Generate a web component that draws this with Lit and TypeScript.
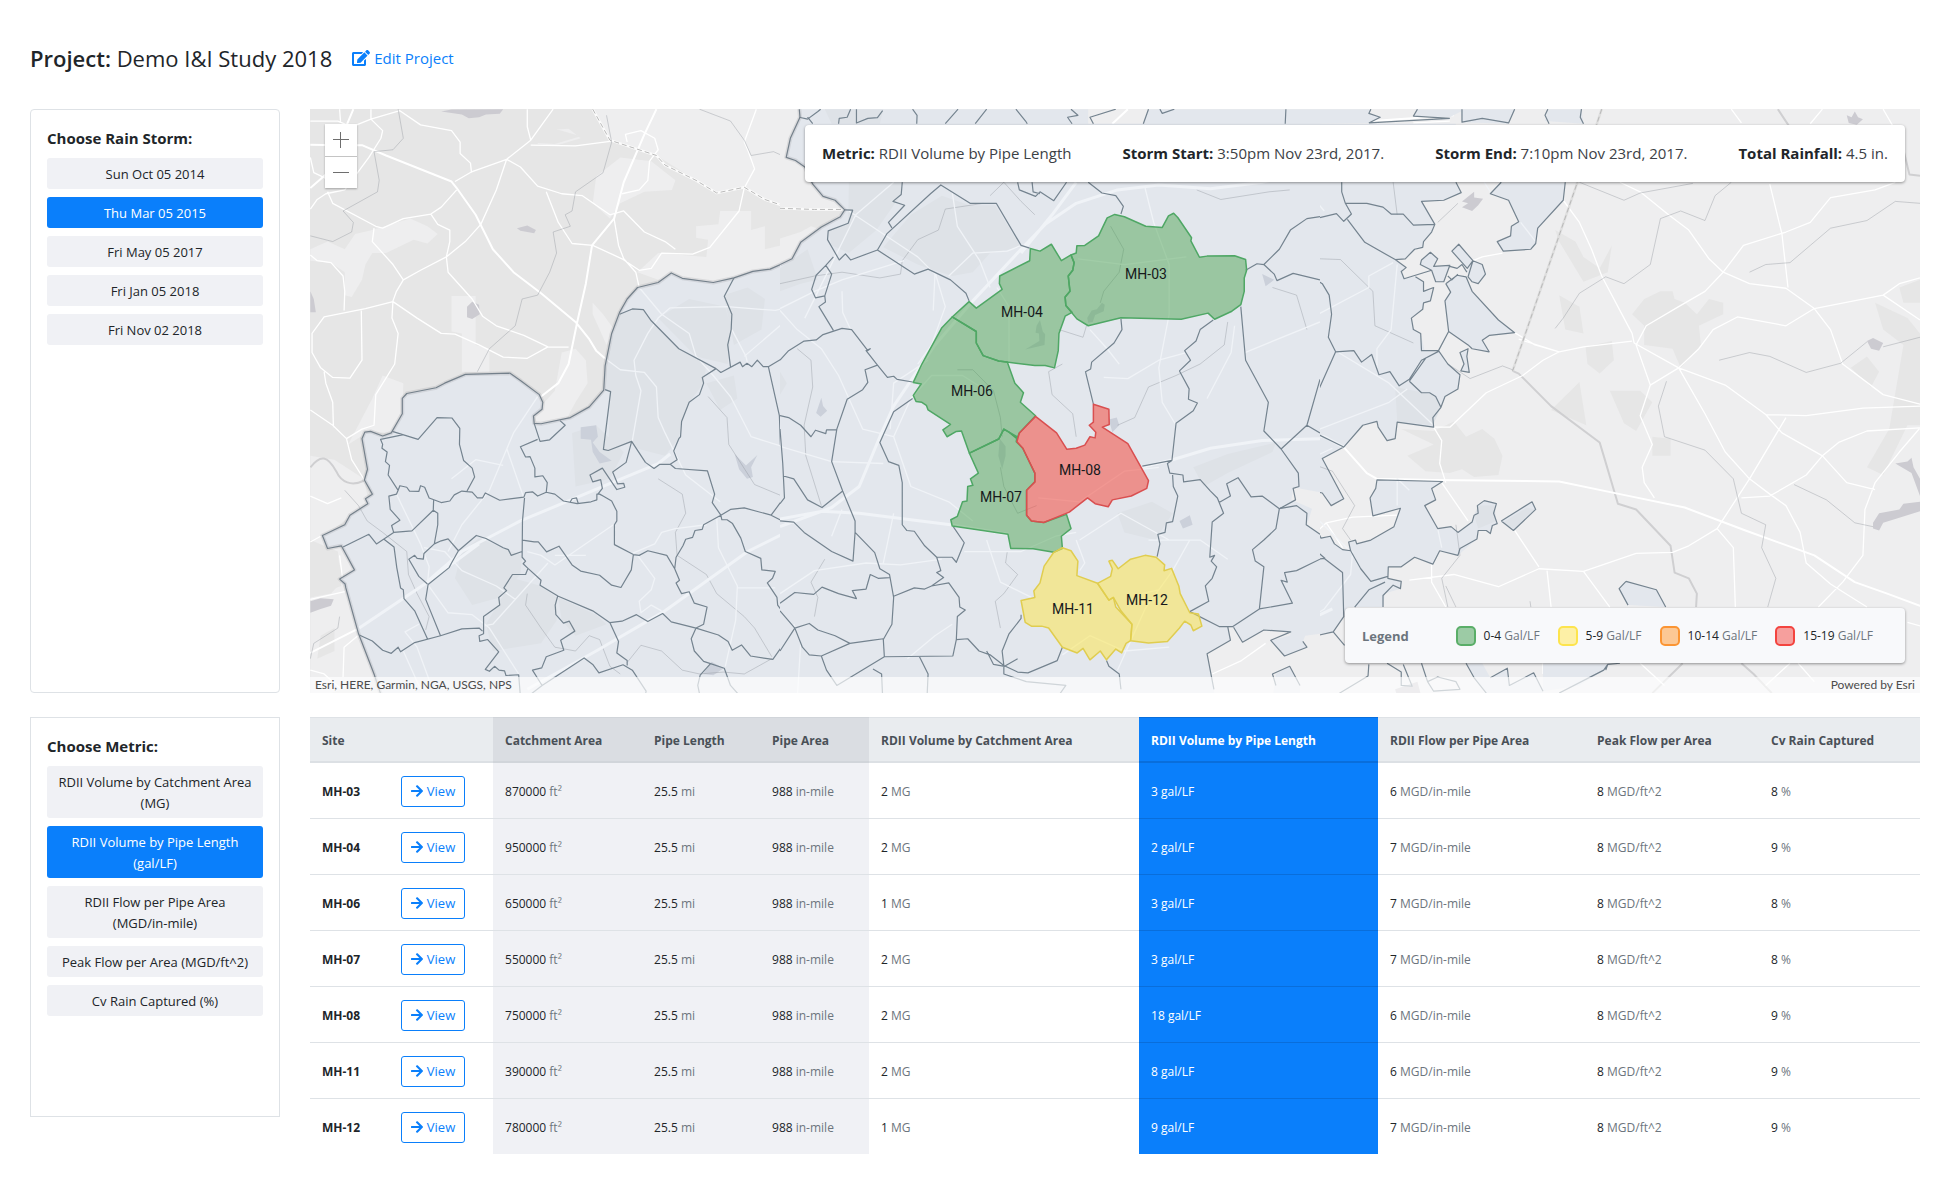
import { LitElement, html, svg, css } from "lit";
import { customElement, state } from "lit/decorators.js";
import { classMap } from "lit/directives/class-map.js";

/** One rectangular sheet of the base map; its paths use a 1568-unit square grid. */
interface Sheet {
  x: number;
  width: number;
  ground: string;
  light: string;
  urban: string;
  water: string;
  area: string;
  edge: string;
  shade: string;
  areaWater: string;
  roads: string;
  highways: string;
  areaRoads: string;
  areaHighways: string;
  streams: string;
  border: string;
  borderBase: string;
  stateLine: string;
  lines: string;
}

const WEST: Sheet = {
  x: -10,
  width: 540,
  ground: "#e6e6e6",
  light: `M850 24 900 105 1035 145 1150 210 1210 243 1290 228 1350 260 1420 282 1568 284 1568 24Z
    M860 200 930 150 1020 160 1090 210 1080 235 1000 240 930 270 900 310 850 270Z
    M1150 330 1215 325 1220 290 1310 290 1310 340 1350 330 1350 390 1490 360 1490 395 1400 450 1310 465 1200 485 1110 475 1040 470 980 450 1040 400 1180 410 1185 365 1150 360Z
    M440 512 510 512 510 640 550 650 550 710 470 710 470 610 440 605Z
    M30 390 80 370 130 390 160 350 210 340 320 310 370 330 400 350 370 375 330 365 250 400 210 400 190 430 180 470 150 515 130 510 130 450 90 425 30 420Z
    M760 660 800 650 830 680 835 740 800 790 770 840 690 850 680 820 740 760Z
    M850 530 880 560 912 600 890 640 870 600 850 560Z
    M700 80 780 75 815 100 740 120 690 115Z
    M30 930 100 940 185 990 200 1050 70 1140 130 1180 160 1228 118 1252 220 1510 30 1568 30 1300 120 1270 110 1180 30 1150Z
    M240 720 300 740 297 820 265 870 200 866 140 900 210 780Z`,
  urban: `M30 1170 100 1180 130 1250 90 1290 30 1300Z M60 1400 100 1380 100 1440 50 1460Z M690 80 740 75 815 95 740 115 680 112Z`,
  water: `M410 30 440 25 590 24 580 36 540 38 520 45 490 48 470 38Z
    M485 540 500 527 520 535 522 560 500 572 485 568Z
    M630 335 660 328 685 340 680 348 640 342Z M30 500 40 520 46 555 30 555Z
    M30 1310 60 1302 98 1305 90 1322 60 1330 30 1340Z`,
  area: `M65 1138 130 1110 145 1085 197 1055 190 1042 210 1030 187 993 196 965 180 885 188 868 205 866 240 878 265 870 297 820 297 780 310 767 395 752 420 740 480 717 610 714 640 733 695 770 705 790 703 808 678 826 680 845 700 846 785 830 840 802 882 758 886 695 905 610 928 555 950 520 980 490 1040 477 1078 452 1110 466 1200 477 1260 465 1315 448 1365 442 1425 418 1568 400 1568 1568 240 1568 215 1500 170 1395 133 1275 115 1252 158 1228 120 1165 80 1172Z`,
  edge: `M240 1568 215 1500 170 1395 133 1275 131 1265 115 1252 158 1228 120 1165 80 1172 65 1138 130 1110 145 1085 197 1055 190 1042 210 1030 187 993 196 965 180 885 188 868 205 866 240 878 265 870 297 820 297 780 310 767 395 752 420 740 480 717 610 714 640 733 695 770 705 790 703 808 678 826 680 845 700 846 785 830 840 802 882 758 886 695 905 610 928 555 950 520 980 490 1040 477 1078 452 1110 466 1200 477 1260 465 1315 448 1365 442 1425 418`,
  shade: `M928 560 965 546 997 548 1020 577 1100 650 1180 690 1172 740 1130 790 1108 840 1100 885 1060 930 975 910 963 892 895 916 902 762 886 757 890 680Z
    M1040 570 1130 520 1235 540 1252 600 1242 690 1150 670Z M1230 510 1300 490 1350 520 1340 600 1260 640Z
    M470 1180 520 1145 600 1175 645 1190 640 1240 580 1300 500 1320 450 1250Z
    M620 1250 700 1270 745 1300 745 1360 700 1420 560 1440 540 1370Z M750 1300 860 1345 890 1370 800 1400 760 1360Z
    M790 870 860 850 940 920 900 990 800 1010Z M1180 740 1260 720 1270 780 1220 810Z`,
  areaWater: `M815 855 860 850 865 880 850 895 870 920 905 943 870 950 850 920 845 888 815 885Z
    M1262 925 1295 955 1328 928 1310 960 1315 985 1298 990 1275 965Z M1170 1500 1195 1468 1230 1485 1200 1503Z`,
  roads: `M30 150 40 190 75 205 M670 118 800 120 900 108 M450 213 500 187 600 155 670 105 735 24 M525 325 570 235 600 155 640 175 690 225 760 245 820 250 900 300 940 290 1000 345 1060 370 1090 390
    M670 105 660 70 660 24 M715 240 750 320 790 375 850 380 935 415 985 445 1020 440 1050 400 1140 403 1190 385 1275 290 1290 230 1320 180 1300 130 1290 110 1325 24
    M912 310 925 380 940 415 975 450 985 490 M206 24 206 50 240 80 235 100 200 150 130 235 75 245 50 260 30 285
    M80 240 95 270 220 330 240 335 300 310 380 298 410 280 455 235 M380 298 400 325 435 340 435 370 425 410 430 450 500 520 530 565 570 590 650 615 720 645 780 646
    M525 325 480 370 425 410 350 445 300 470 280 500 270 525 267 570 285 610 275 690 220 770 215 850 180 860 135 885 M215 335 210 370 270 430 300 470
    M270 527 190 545 70 567 35 610 35 660 60 700 95 725 145 727 180 680 178 550 M270 527 340 570 410 610 450 612 520 640 590 672 660 675 720 645
    M30 405 50 420 90 425 125 460 130 500 128 550 M70 710 75 740 95 790 97 855 M30 810 95 850 135 885 150 940 187 993
    M206 50 290 28 350 65 440 80 465 110 465 140 495 165 498 190 M115 24 118 60 M30 55 110 55 150 70 206 50
    M950 110 945 90 990 80 1030 100 1040 130 1015 160 1010 210 985 235 935 245 M30 1035 80 1055 120 1040 M30 1155 60 1140
    M115 1190 125 1260 M30 1305 130 1285 M30 1490 70 1500 120 1540 M125 1508 128 1430 175 1395`,
  highways: `M30 117 110 118 180 118 250 145 440 213 455 230 510 300 560 390 620 450 700 505 800 580 840 625 860 655 885 675 M30 230 75 195 110 120 155 24
    M1035 24 1000 90 940 215 912 310 848 380 830 480 805 580 780 690 750 740 700 775 M30 1445 172 1380`,
  areaRoads: `M885 675 930 705 1000 712 1035 750 1040 830 1060 870 1120 980 1220 1050 M1075 543 1040 570 1010 610 970 680 975 720 990 760 965 890
    M1075 543 1240 540 1380 550 1568 510 M985 490 1050 560 1130 610 1150 670 1200 720 1250 775 1310 880 1400 905 M1254 600 1295 670 1300 690 M1290 670 1420 570
    M690 775 620 870 550 1020 470 1110 430 1180 M600 910 650 1040 M720 1210 560 1370 530 1375 M660 1180 700 1190 740 1215 910 1110 M740 1190 830 1190
    M440 990 510 940 590 955 M360 1170 420 1180 470 1230 570 1270 625 1305 M280 1030 350 1160 375 1220 370 1265 430 1340 500 1345 550 1380 635 1500
    M300 1440 350 1540 M345 1370 305 1390 340 1430 385 1540 M1210 1090 1215 1170 1270 1270 1265 1360 1235 1480 M1270 1275 1380 1275
    M980 1190 1030 1250 1020 1280 985 1310 990 1340 1020 1320 1050 1335 M1180 1110 1090 1120 1050 1130 1030 1160 965 1185`,
  areaHighways: `M172 1380 370 1260 520 1160 M660 1540 860 1440 1060 1335 1300 1180 1500 1090 M370 1258 470 1180 640 1100 880 1010 1040 950 1075 925`,
  streams: `M285 24 300 100 270 130 215 135 230 210 225 240 125 290 155 320 150 345 95 370 30 355
    M890 40 905 110 880 190 800 240 790 290 770 300 785 330 735 345 745 400 725 450 690 510 645 520 625 590 550 650 515 710
    M1160 24 1250 55 1290 105 1310 145 1375 135 1412 150 M1185 775 1240 830 1245 900 1320 1005 1400 1035 1500 1070
    M1040 990 1110 1030 1120 1080 1090 1130 1095 1190 1180 1240 1210 1290 1290 1350 1320 1380 1370 1455 M130 1020 170 1060 195 1100 240 1130 310 1180 315 1240 340 1290 375 1350 365 1385
    M660 1290 655 1320 700 1380 740 1430 800 1440 840 1400 870 1410 900 1480 930 1500 M950 1470 990 1425 1050 1440 1110 1490 1160 1500 1230 1495 1290 1500 1370 1460 M115 1350 110 1380 40 1420 30 1460`,
  border: `M850 24 900 105 1035 145 1060 170 1150 210 1210 243 1290 228 1350 260 1420 282 1568 284`,
  borderBase: "#fbfbfb",
  stateLine: `M30 960C60 925 80 930 105 970 120 1000 150 1010 185 995`,
  lines: `M268 866 343 887 398 830 441 831 464 858 463 900 475 942 500 962 507 985 485 1022
    M297 875 234 887 240 900 238 910 253 920 248 945 260 955 256 980 285 1020 290 1008 310 1012 318 1022 345 1023 350 1008 362 1012 375 1040 410 1052 435 1048 448 1032 470 1022 500 1025 515 1040 530 1040 538 1027 580 1046 650 1038 655 1026 675 1024 690 1035 715 1025 740 1030 765 1048 805 1055 845 1050 862 1045 862 1030 870 1030 880 1035 905 1048 920 1075 920 1100 913 1110 913 1162 968 1188
    M285 1020 280 1030 258 1035 262 1070 290 1098 266 1112 272 1130 325 1126 387 1072 388 1046 M125 1168 200 1135 222 1160 272 1130
    M387 1072 400 1080 400 1110 390 1160 360 1185 358 1200 340 1198 333 1190 316 1200 345 1245 370 1265
    M390 1160 410 1152 430 1147 460 1178 440 1210 433 1222 372 1266 365 1305 408 1400 M460 1178 512 1138 540 1146 590 1170 605 1175 613 1190 645 1180
    M243 1147 273 1168 281 1222 292 1275 300 1280 302 1303 333 1335 371 1410
    M172 1398 210 1414 240 1438 265 1446 285 1430 292 1442 333 1418 408 1400 470 1382 520 1380 530 1388
    M652 1040 646 1100 645 1195 655 1205 648 1212 662 1224 655 1240 617 1240 592 1275 600 1282 590 1290 577 1300 580 1320 533 1350 533 1395 520 1400 522 1415 545 1410 577 1442 538 1488 550 1493 565 1480 578 1490 594 1492 598 1504 635 1502 640 1560
    M646 1150 680 1155 692 1155 716 1181 752 1166 790 1215 815 1231 870 1242 905 1268 932 1274 962 1228 968 1188
    M968 1188 985 1190 1010 1178 1065 1190 1088 1225 1092 1195 1112 1165 1120 1148 1140 1143 1147 1125 1168 1122 1172 1110 1222 1085 1250 1070 1290 1066 1368 1085 1405 1040 1403 945 1395 900 1392 825 1360 697
    M1222 1085 1197 1052 1204 1030 1183 969 1090 963 1075 952 1045 952 1028 963 1003 947 963 892 895 916 881 913 902 762 886 757
    M963 892 947 947 908 972 922 1003 940 1002 943 1012 920 1018 878 962 842 980 850 998 873 992 878 1015 865 1030
    M1075 952 1095 940 1085 917 1100 885 1105 880 1108 840 1130 790 1160 770 1172 740 1168 725 1208 702 1222 712 1278 685 1285 697 1298 688 1312 697 1328 680 1345 697 1360 697 1405 673
    M928 560 965 546 997 548 1020 577 1100 650 1208 702 M1260 465 1232 513 1254 560 1252 600 1242 640 1250 697
    M680 845 697 892 725 888 770 850 755 838 M690 887 640 906 655 933 668 932 682 962 682 985 705 982 718 1000 715 1025
    M662 1224 700 1255 697 1268 750 1297 850 1335 900 1366 935 1362 977 1345 1010 1363 1053 1342 1078 1364 1150 1380
    M1088 1225 1102 1255 1092 1262 1108 1290 1130 1285 1145 1315 1182 1325 1172 1370 1150 1380 1136 1408 1145 1440 1172 1467 1192 1473 1232 1485 1250 1530 1280 1560
    M1150 1380 1215 1398 1243 1415 1255 1438 1282 1424 1308 1453 1373 1462 1398 1430
    M748 1297 741 1320 743 1345 765 1367 782 1362 798 1388 757 1412 766 1438 715 1455 702 1484 675 1490 703 1530
    M660 1560 703 1530 825 1458 850 1475 868 1497 938 1476 965 1490 1005 1545 1000 1568 M900 1366 925 1415 920 1445 950 1465 950 1478
    M1222 1085 1225 1097 1240 1097 1256 1107 1280 1145 1293 1180 1338 1198 1341 1228 1380 1232 1372 1250 1357 1262 1385 1300 1387 1320 1437 1380
    M1368 1085 1405 1102 M1192 1473 1162 1503 1155 1530 1162 1560 M785 1050 790 1042 803 1040 808 1055`,
};

const CENTRE: Sheet = {
  x: 470,
  width: 540,
  ground: "#eeeeef",
  light: "",
  urban: `M0 284 100 287 188 287 120 340 90 330 60 345 0 362Z`,
  water: "",
  area: `M56 24 895 24 895 62 1055 62 1070 24 1568 24 1568 1025 1490 1012 1485 1045 1545 1068 1530 1110 1568 1135 1568 1395 1525 1400 1518 1415 1530 1430 1465 1453 1425 1412 1480 1400 1483 1390 1405 1385 1343 1417 1317 1378 1300 1380 1310 1410 1240 1447 1265 1568 0 1568 0 430 35 415 60 372 120 332 175 305 188 287 160 262 125 252 95 220 72 175 45 158 18 150 30 100 58 45Z
    M1430 1568 1440 1500 1480 1480 1510 1530 1510 1568Z`,
  edge: `M0 430 35 415 60 372 120 332 175 305 188 287 160 262 125 252 95 220 72 175 45 158 18 150 30 100 58 45 56 24`,
  shade: `M1200 960 1300 925 1440 895 1430 920 1300 975 1230 1010Z M200 215 350 215 352 247 280 340 200 400 150 380 140 342 198 322Z
    M0 440 80 390 110 470 60 480 0 500Z M470 250 550 275 625 275 700 385 610 400 560 450 500 460 430 440 400 430 300 385 380 300Z
    M980 1080 1080 1050 1140 1080 1090 1150 1000 1130Z M130 24 300 24 290 62 150 62Z M0 710 20 740 0 770Z`,
  areaWater: `M105 818 120 778 125 800 137 812 118 828Z M955 835 978 830 985 850 965 868Z M1160 1100 1190 1085 1198 1110 1170 1120Z M1400 455 1435 470 1410 487Z
    M745 590 755 575 763 605 770 612 768 640 712 652 753 630 752 610 742 608Z M892 570 905 550 920 547 935 530 943 535 940 552 915 562 908 580 895 582Z M638 885 655 905 655 930 645 965 634 930Z`,
  roads: `M1255 1500 1340 1465 1410 1420`,
  highways: `M965 62 1010 24`,
  areaRoads: `M0 545 100 500 180 470 360 420 M0 550 50 600 120 650 170 720 240 860 330 880 380 1010 490 1050 560 1100
    M72 570 160 410 220 300 330 215 M200 290 300 350 400 410 450 455 445 550 M500 240 515 330 580 420 610 490 M490 460 560 400 660 395 700 380 M630 490 665 540 665 690
    M1060 230 1085 320 1130 430 1130 560 1100 700 1110 790 1150 850 M750 1040 870 1050 1000 970 1100 960 M870 1150 990 1080 1130 1150 1220 1150 1300 1200 M1070 1150 1190 1150
    M980 1490 1060 1330 1140 1230 1190 1150 M860 1150 885 1210 870 1230 M535 1180 700 1180 800 1140 860 1130 M600 1150 640 1260 730 1300 M470 1200 350 1215 250 1210 100 1230 0 1290
    M900 600 950 650 985 690 M1350 660 1568 580 M1240 780 1310 660 1320 590 M0 905 150 945 300 950 M330 880 380 780 440 720 530 720 600 760
    M450 450 480 540 440 640 400 690 M180 500 182 555 205 600 M150 1140 180 1070 M320 860 330 740 430 680
    M40 1370 60 1420 50 1568 M300 1210 330 1080 M370 1460 450 1400 500 1370 M820 1450 900 1400 1000 1440 1130 1430 M940 725 1010 728 1100 680 1180 660 M1100 1280 1050 1290 M865 415 1000 430 1180 410`,
  areaHighways: `M0 1115 150 1065 230 1010 290 880 330 800 450 640 560 525 700 390 770 325 860 270 980 235 1100 222 1250 232 1400 215 1568 180 M0 1095 120 1075 230 1080 495 1110 665 1135 M1050 960 1140 940 1250 910 1400 890 1568 885 M700 400 790 300 860 215`,
  streams: `M50 650 90 680 95 750 70 850 75 930 120 1060 M0 480 100 460 180 450 290 465 350 455 355 420 400 365 460 340 480 285 590 270 M610 250 650 215 700 265 740 300
    M820 690 780 710 790 770 850 820 860 880 M1300 580 1290 640 1220 690 1150 720 1070 750 1030 830 980 850 M660 1180 655 1210 690 1240 650 1290 625 1310 640 1380
    M960 330 998 390 985 450 940 500 930 530 M515 705 560 705 620 760 640 830 645 880 M640 960 650 1010 690 1080 745 1060
    M1210 235 1280 260 1420 240 1480 235 M1430 490 1500 510 1530 600 M100 1350 110 1300 90 1260 130 1200 M810 600 880 620 890 590`,
  border: `M0 283 100 286 188 286`,
  borderBase: "#fbfbfb",
  stateLine: "",
  lines: `M56 45 80 50 110 30 118 24 M80 45 95 62 M170 62 172 48 195 45 205 24 M222 24 222 60 255 48 283 46 298 28 M385 24 398 40 397 62 M480 62 517 24 M567 62 600 24 M685 24 713 55 718 62
    M845 24 865 40 835 45 848 62 M910 62 900 45 975 24 M1055 62 1070 24 M1103 24 1110 35 1145 24 M1469 24 1467 62
    M188 287 211 288 198 322 140 342 138 365 172 418 190 402 205 418 283 392 310 350 437 245 467 222 552 270 628 270 700 380 725 387
    M355 215 352 247 328 265 362 275 315 320 325 334 M283 392 390 455 430 442 495 470 540 505 549 525
    M155 410 133 432 150 455 130 512 103 517 92 495 105 458 133 432 M130 512 132 528 113 540 155 602
    M0 680 25 655 70 630 105 627 125 613 180 597 208 600 255 655 262 650 250 655 283 693 312 725 330 722 340 730 385 737
    M283 693 247 705 255 738 240 757 195 782 165 860 150 945 182 1022 218 1100 218 1130 275 1183 290 1225 318 1240 330 1300 325 1370 300 1410 303 1455 502 1453 512 1410 545 1408 578 1440 610 1450 650 1478
    M0 825 25 830 60 850 90 880 103 863 133 872 135 862 165 862 M0 860 8 950 13 1040 0 1055 M8 982 40 990 80 1045 122 1065 182 1022
    M385 780 330 815 290 895 315 945 345 955 355 1000 355 1110 368 1125 390 1127 420 1165 455 1195 500 1195 512 1208 535 1157 503 1115
    M0 1100 40 1103 70 1130 150 1180 212 1205 218 1130 M455 1195 467 1230 455 1235 475 1248 440 1270 420 1278 390 1275 330 1297
    M0 1315 43 1287 98 1292 122 1273 170 1290 222 1303 210 1282 250 1278 262 1240 285 1250 318 1248 M440 1270 490 1262 520 1300 522 1325 538 1333 515 1350 512 1410
    M0 1335 43 1380 0 1440 M43 1380 85 1368 110 1385 160 1400 203 1420 265 1412 300 1408 M43 1380 65 1430 85 1450 120 1453 203 1420 M120 1453 135 1490 165 1530 303 1455 M270 1487 295 1500 298 1560
    M405 1455 430 1500 427 1560 M650 1478 650 1500 715 1520 830 1530 800 1568 M700 1345 700 1355 665 1395 645 1440 650 1478 690 1495 720 1497 805 1465 820 1430 M600 1440 620 1475 652 1480 690 1460
    M690 215 695 235 742 252 755 240 795 263 832 215 M732 215 735 240 755 245 M895 215 935 243 975 250 997 278 990 298
    M1352 445 1385 428 1405 430 1435 455 1443 472 1490 453 1568 470 M1405 430 1450 390 1482 340 1530 310 1568 305
    M990 572 993 600 970 635 905 685 902 703 887 710 910 795 M1258 575 1220 600 1208 630 1175 655 1192 680 1160 708 1188 755 1186 782 1212 792 1200 812 1150 845 1138 942 1052 957
    M1338 540 1352 680 1418 790 1405 865 1455 912 1505 975 1507 1010 1490 1015 1497 1045 1450 1068 M1455 912 1530 850 1568 870 M1530 850 1568 730
    M1138 942 1125 950 1132 975 1170 980 1172 998 1220 992 1250 1022 1270 1040 1288 1080 1255 1103 1248 1195 1262 1190 1252 1205 1268 1220 1255 1250 1235 1270 1245 1310 1190 1337
    M1140 980 1142 1010 1155 1035 1140 1102 1122 1105 1118 1130 1097 1135 1103 1160 1095 1193
    M1275 1052 1308 1035 1297 1003 1330 987 1368 1037 1400 1035 1450 1068 1440 1120 1405 1150 1372 1175 1380 1205 1405 1220 1392 1330
    M1190 1337 1275 1376 1315 1376 1392 1330 1488 1315 1455 1255 1473 1260 1465 1235 1500 1230 1568 1200 M1450 1068 1500 1060 1530 1080 1528 1110 1568 1135
    M1300 1376 1308 1412 1240 1447 1260 1540 M1317 1378 1343 1417 1405 1385 1483 1390 1425 1412 1465 1453 1530 1430 1518 1415 M948 1465 955 1480 985 1500 990 1540 M1440 1530 1430 1500 1480 1480 1510 1530`,
};

const EAST: Sheet = {
  x: 990,
  width: 635,
  ground: "#eeeeef",
  light: "",
  urban: `M630 340 680 370 700 410 740 440 770 380 760 450 700 475 640 370Z
    M820 560 850 520 890 500 920 500 925 520 950 530 980 560 1010 520 1045 530 1045 560 985 590 990 640 940 700 920 650 850 640 850 590Z
    M640 510 690 540 700 610 655 600Z M705 645 770 630 775 680 740 715 710 690Z M690 737 707 850 620 810Z M765 760 840 760 870 790 830 865 800 845Z
    M870 880 915 885 915 930 870 930Z M250 860 330 865 380 840 410 880 450 860 480 885 500 930 490 980 430 985 400 965 370 975 310 970 265 930 330 900Z
    M1480 490 1531 470 1531 530 1490 530Z M1420 530 1500 570 1531 610 1568 610 1568 850 1500 850 1440 980 1400 960 1455 860 1490 640 1440 600Z M1360 700 1400 670 1430 710 1410 750Z`,
  water: `M400 265 430 240 430 255 452 258 440 275 425 290 400 280 415 270Z M1350 40 1362 45 1370 30 1378 45 1390 50 1375 65 1355 60Z M1400 630 1415 622 1440 635 1430 655 1410 650Z
    M1470 950 1500 945 1510 935 1515 960 1531 990 1531 1035 1510 975Z M1415 1105 1430 1080 1480 1070 1490 1055 1531 1050 1531 1075 1470 1095 1440 1105 1430 1125 1415 1120Z M235 1540 290 1520 300 1560 240 1560Z`,
  area: `M0 24 175 24 170 35 198 45 170 60 0 62Z M290 24 530 24 515 62 400 58 397 30 370 45 280 42Z M612 24 695 24 700 62 605 55Z
    M0 62 0 1015 55 1027 77 1060 108 1042 55 937 108 907 155 850 190 840 193 855 215 890 235 885 240 842 330 855 328 830 348 803 358 775 390 755 395 718 365 690 342 655 308 655 298 610 280 600 275 570 303 547 305 530 322 525 325 497 305 500 305 475 285 462 257 467 250 448 262 438 235 417 260 415 283 390 303 385 305 370 325 345 333 325 300 265 355 262 398 242 385 215 385 62Z
    M368 475 388 458 410 462 425 500 490 575 530 608 468 615 450 628 467 658 425 650 415 640 367 605 358 525 372 502 360 480Z
    M497 215 655 215 650 262 587 335 582 375 570 390 502 395 487 370 520 355 522 330 540 318 515 262 470 245Z
    M392 377 427 420 413 440 375 395Z M427 420 450 430 458 455 440 480 425 475 415 462 413 445Z M322 398 340 415 330 435 370 432 355 475 335 475 325 445 297 430 300 418Z
    M415 650 412 670 418 712 397 708 405 690 395 660Z
    M0 1058 35 1080 15 1105 45 1130 52 1145 75 1140 85 1160 105 1175 125 1178 120 1155 137 1150 140 1160 175 1150 232 1115 248 1067 180 1087 173 1040 187 1015 190 993 352 997 325 1015 335 1045 308 1060 340 1120 373 1115 390 1130 425 1103 430 1085 440 1080 438 1060 455 1047 485 1055 478 1080 487 1107 475 1112 470 1133 460 1125 440 1125 437 1147 390 1190 345 1178 328 1213 283 1195 250 1220 218 1220 217 1250 250 1258 248 1277 210 1290 205 1325 118 1325 108 1350 82 1390 40 1400 0 1410Z
    M497 1100 573 1050 582 1070 527 1125Z M805 1258 880 1280 903 1325 810 1320 788 1277Z M410 1472 430 1510 460 1550 600 1550 577 1497 517 1530 512 1485 470 1510 450 1472Z M600 1472 760 1472 750 1490 690 1530 600 1545Z`,
  edge: "",
  shade: `M235 750 330 770 348 803 328 850 240 840Z M430 1085 440 1060 480 1060 485 1100 440 1120Z M500 1105 560 1065 580 1070 527 1120Z`,
  areaWater: "",
  roads: `M650 262 690 320 720 390 745 460 800 570 820 610 825 635 935 700 1000 820 1050 920 1110 990 1160 1030 1200 1060 1235 1130 1250 1210 1310 1265 1340 1285 1400 1325
    M530 608 580 640 640 658 700 645 820 630 M540 625 640 658 600 680 550 720 460 765 370 855 330 855
    M790 215 840 240 910 300 960 340 1010 415 1045 450 1110 480 1200 492 1270 545 1310 600 1340 690 1440 770 1531 795 1568 800 M1160 220 1190 350 1205 490
    M1045 450 1095 380 1200 345 1260 320 1310 255 1420 235 1470 215 M1045 450 1000 500 935 540 855 590 830 640 865 745 840 825 870 900 845 960 850 1000 875 1040
    M865 745 935 700 985 650 1020 600 1080 567 1200 590 1270 545 1440 510 1480 480 1531 465 M935 700 1050 745 1150 822 1250 825 1390 805 1531 800
    M1150 822 1190 870 1290 930 1350 1000 1420 1018 M1200 830 1110 990 1030 1120 960 1165 920 1182 830 1185 700 1232 590 1225 490 1272 380 1240 270 1255
    M1440 510 1531 575 M1531 857 1480 920 1420 1000 1395 1070 1390 1190 1340 1260 1280 1325 M1531 857 1400 865 1330 895 1290 930 1250 980 1160 1035 1090 1040
    M1030 1120 1070 1170 1075 1325 M530 1125 590 1220 M610 1230 620 1325 M700 1232 765 1325 M350 1000 415 1100 M330 855 350 890 345 950 360 1000 M325 1200 325 1260 360 1325
    M1065 24 1090 60 M1290 24 1260 62 M1440 24 1465 70 M427 420 450 410 500 400 M65 1105 130 1090 240 1085 M105 1170 65 1105 40 1130 M1500 1365 1568 1385 M840 1472 900 1530 M1150 1530 1210 1472 M1230 1472 1270 1520 M600 1472 600 1500 M0 1500 40 1550 M280 60 370 55`,
  highways: `M108 907 165 975 190 990 330 993 640 997 790 1030 950 1065 1100 1125 1270 1190 1370 1260 1450 1290 1531 1322 1568 1325 M180 55 380 40`,
  areaRoads: `M0 585 170 490 170 460 230 425 M240 430 225 600 190 650 190 700 M95 660 220 740 330 850 M265 755 220 790 0 880 M0 1370 60 1330 125 1240 130 1180 M0 215 60 290 M240 1060 240 990 270 1020 M0 1050 125 1180 150 1225
    M0 950 80 910 M340 1120 350 1170 M455 215 470 240 M545 320 582 370`,
  areaHighways: `M0 870 60 880 108 907 M0 1370 80 1330`,
  streams: `M690 215 800 262 840 243 970 218 M1065 215 1025 250 1000 315 940 290 890 310 865 430 800 480 755 462 690 505 650 570 630 597
    M1110 450 1150 430 1210 425 1260 380 1310 335 1400 315 1470 265 1531 270 M1035 680 1110 660 1160 670 1250 712 1335 688 1400 632 M1440 645 1531 620
    M905 735 885 800 900 880 1000 915 1070 990 1090 1080 1150 1110 1140 1170 1175 1250 1155 1325 M1220 1005 1300 1045 1370 1105 1415 1115
    M525 705 500 695 420 728 365 690 M0 413 100 417 180 500 185 590 280 635 M230 215 240 300 M365 1325 350 1250 395 1190 385 1110 M385 1325 360 1270 M390 270 340 320 M0 940 80 970 135 1060 105 1120 125 1150 M570 1325 568 1310`,
  border: `M745 24 685 215 525 708`,
  borderBase: "#dedede",
  stateLine: `M525 708 540 715 620 800 740 895 750 930 785 1055 830 1070 915 1165 925 1235 960 1250 980 1290 978 1325 M945 1472 870 1550 M1090 1472 1120 1500 1165 1550 M1180 24 1215 80 M1490 130 1505 195 1531 198`,
  lines: `M175 24 170 35 198 45 170 60 M170 60 370 48 M290 24 280 42 370 48 M400 24 400 58 450 48 515 60 530 24 M612 24 605 40 615 62 M695 24 692 45 700 62
    M385 215 398 242 355 262 300 265 333 325 325 345 305 370 303 385 283 390 260 415 235 417 262 438 250 448 257 467 325 445 335 475 355 475 370 432 330 435 340 415 322 398 300 418 297 430 325 445
    M285 462 305 475 305 500 330 490 322 525 305 530 303 547 275 570 280 600 298 610 300 655 342 655 365 690 395 718 390 755 358 775 348 803 328 830 330 855 240 842 235 885 215 890 193 855 190 840 155 850 108 907 55 937 108 1042 77 1060 55 1027 0 1015
    M360 480 388 458 410 462 425 500 490 575 530 608 468 615 450 628 467 658 425 650 415 640 367 605 358 525 372 502 360 480 M367 605 342 655
    M497 215 470 245 515 262 540 318 522 330 520 355 487 370 502 395 570 390 582 375 587 335 650 262 655 215
    M392 377 427 420 413 440 375 395Z M427 420 450 430 458 455 440 480 425 475 415 462 427 420 M370 435 388 440 400 430 412 450 M365 460 375 470 390 455 M415 650 412 670 418 712 397 708 405 690 395 660Z
    M0 1058 35 1080 15 1105 45 1130 52 1145 75 1140 85 1160 105 1175 125 1178 120 1155 137 1150 140 1160 175 1150 232 1115 248 1067 180 1087 173 1040 187 1015 190 993 352 997 325 1015 335 1045 308 1060 340 1120 373 1115 390 1130 425 1103 430 1085 440 1080 438 1060 455 1047 485 1055 478 1080 487 1107 475 1112 470 1133 460 1125 440 1125 437 1147 395 1172 390 1190 345 1178 328 1213 283 1195 250 1220 218 1220 217 1250 250 1258 248 1277 230 1268 205 1295 205 1325
    M0 320 90 297 108 317 127 298 112 270 165 270 205 280 225 298 255 298 280 327 333 325 M103 215 103 240 112 270 M117 312 160 372 235 417
    M0 453 25 460 55 480 72 510 78 560 70 620 88 658 45 760 17 850 37 870 108 907 M0 860 17 850 M88 658 133 655 152 685 177 665 195 718 222 710 245 747 270 730 300 680 342 657
    M270 735 300 765 320 765 335 775 348 803 M270 735 310 675 M0 1225 45 1200 60 1198 105 1235 108 1350 82 1390 110 1425 M82 1390 40 1400 5 1405 18 1415 0 1435 M45 1145 42 1180 62 1198 M125 1178 150 1225 175 1258 217 1245 M135 1325 170 1280 210 1260
    M497 1100 573 1050 582 1070 527 1125 497 1100 M805 1258 880 1280 903 1325 M810 1320 788 1277 805 1258
    M170 1475 168 1505 70 1568 M215 1472 250 1495 250 1530 277 1532 255 1475 M300 1472 315 1520 340 1508 385 1520 395 1540 330 1545 315 1520 M410 1472 430 1510 460 1550 M640 1550 750 1490 760 1475 790 1472 M470 1510 512 1485 517 1530 577 1497 600 1545 M760 1475 755 1490`,
};

const SHEETS: Sheet[] = [WEST, EAST, CENTRE];

interface Catchment {
  name: string;
  band: "low" | "mid" | "top";
  x: number;
  y: number;
  d: string;
}

const CATCHMENTS: Catchment[] = [
  { name: "MH-03", band: "low", x: 836, y: 165, d: "M862 381 885 380 925 355 950 308 972 299 1000 305 1062 330 1110 333 1128 303 1143 296 1155 307 1195 360 1193 368 1218 411 1240 408 1320 407 1352 417 1355 445 1348 465 1348 500 1338 535 1312 552 1262 573 1243 557 1165 573 990 569 895 590 862 572 830 537 828 515 842 500 837 460 850 445 854 425 845 405 860 400Z" },
  { name: "MH-04", band: "low", x: 712, y: 203, d: "M500 567 549 527 570 544 645 495 637 480 638 460 725 420 727 388 755 395 788 377 817 420 845 405 854 425 850 445 837 460 842 500 828 515 830 537 848 555 828 565 810 610 808 655 797 700 770 694 740 694 635 682 590 668 570 635 570 605Z" },
  { name: "MH-06", band: "low", x: 662, y: 282, d: "M500 567 570 605 570 635 590 668 635 682 660 685 682 740 707 765 698 790 742 825 695 870 688 885 665 868 650 860 635 886 550 923 527 865 512 866 485 880 473 862 495 848 430 810 425 798 412 790 395 788 387 772 410 742 387 738 412 690 470 595Z" },
  { name: "MH-07", band: "low", x: 691, y: 388, d: "M550 923 635 886 650 860 665 868 688 880 686 893 705 910 740 975 740 998 716 1020 716 1085 730 1100 766 1104 832 1083 845 1120 817 1140 820 1172 795 1182 735 1173 670 1172 662 1135 500 1113 496 1097 515 1088 530 1050 543 1048 545 1010 560 1007 553 990 576 975Z" },
  { name: "MH-08", band: "top", x: 770, y: 361, d: "M742 827 803 870 833 913 860 910 885 902 900 880 915 883 917 868 898 850 910 842 910 795 955 808 956 848 936 855 1010 898 1070 995 1065 1015 1020 1035 965 1045 953 1063 915 1055 893 1040 840 1077 766 1104 730 1100 716 1085 716 1020 740 998 740 975 705 910 688 893 695 870Z" },
  { name: "MH-11", band: "mid", x: 763, y: 500, d: "M795 1182 820 1170 845 1178 865 1205 862 1243 922 1263 955 1307 968 1300 975 1325 1022 1370 1018 1413 1005 1420 992 1445 975 1435 948 1463 930 1440 900 1463 880 1433 863 1445 820 1430 780 1380 760 1375 730 1375 712 1365 700 1308 740 1300 737 1283 755 1262 767 1218Z" },
  { name: "MH-12", band: "mid", x: 837, y: 491, d: "M922 1263 960 1245 965 1225 955 1205 965 1203 982 1225 1018 1200 1060 1190 1092 1195 1117 1215 1115 1230 1137 1224 1158 1270 1162 1290 1190 1340 1215 1343 1225 1375 1200 1387 1193 1372 1175 1362 1160 1380 1125 1415 1070 1419 1018 1413 1022 1370 990 1335 968 1300 955 1307Z" },
];

@customElement("catchment-map")
class CatchmentMap extends LitElement {
  static styles = css`
    :host { display: block; position: relative; overflow: hidden; background: #e6e6e6; }
    .canvas { display: block; position: absolute; inset: 0; width: 100%; height: 100%; }
    .canvas path { vector-effect: non-scaling-stroke; fill: none; stroke-linejoin: round; stroke-width: 1px; }
    .canvas .light { fill: #eeeeef; }
    .canvas .urban { fill: #e6e6e6; }
    .canvas .water { fill: #cccbd1; }
    .canvas .area { fill: #e3e7ed; }
    .canvas .shade { fill: #dee2e7; }
    .canvas .area-water { fill: #cbd0da; }
    .canvas .road { stroke: #ffffff; stroke-width: 1.3px; }
    .canvas .highway { stroke: #ffffff; stroke-width: 2px; }
    .canvas .area-road { stroke: #f0f3f7; stroke-width: 1.3px; }
    .canvas .area-highway { stroke: #f0f3f7; stroke-width: 3px; }
    .canvas .stream { stroke: #8c9098; stroke-opacity: 0.38; }
    .canvas .border-base { stroke-width: 2.5px; }
    .canvas .border { stroke: #b9b9b9; stroke-dasharray: 5 3; }
    .canvas .state-line { stroke: #cfcfd1; stroke-width: 2px; }
    .canvas .halo { stroke: #8d8d92; stroke-opacity: 0.2; stroke-width: 4px; }
    .canvas .line { stroke: #74838f; stroke-width: 1.2px; }
    .canvas .edge { stroke: #74808b; stroke-width: 1.2px; }
    .canvas .low { fill: rgba(67, 160, 71, 0.46); stroke: #4fa765; stroke-width: 1.5px; }
    .canvas .mid { fill: rgba(253, 230, 75, 0.52); stroke: #e0cd4f; stroke-width: 1.5px; }
    .canvas .top { fill: rgba(244, 67, 54, 0.52); stroke: #d94f50; stroke-width: 1.5px; }
    .name { font: 14px Roboto, sans-serif; fill: #16191c; text-anchor: middle; dominant-baseline: central; }
    .zoom { position: absolute; top: 15px; left: 15px; width: 32px; box-shadow: 0 1px 2px rgba(0, 0, 0, 0.3); }
    .zoom button { display: flex; align-items: center; justify-content: center; width: 32px; height: 32px; padding: 0; border: 0; background: #fff; }
    .zoom button + button { border-top: 1px solid #c4c4c4; }
    .zoom svg { width: 16px; height: 16px; stroke: #6e6e6e; }
    .info, .legend { position: absolute; right: 15px; box-sizing: border-box; display: flex; align-items: center; justify-content: space-between; border-radius: 4px; box-shadow: 0 1px 3px rgba(0, 0, 0, 0.4); color: #212529; }
    .info { top: 16px; width: 1100px; max-width: calc(100% - 64px); height: 57px; padding: 0 17px 2px; background: #fff; font-size: 15px; }
    .info p { margin: 0; white-space: nowrap; }
    .info b { font-weight: 700; }
    .info span { color: #3c4146; }
    .legend { bottom: 30px; width: 560px; height: 55px; padding: 0 32px 0 17px; background: #f8f9fb; font-size: 12px; }
    .legend h3 { margin: 0; font-size: 13px; font-weight: 700; color: #6c757d; }
    .legend ul { display: flex; gap: 18px; margin: 0; padding: 0; list-style: none; }
    .legend li { display: flex; align-items: center; gap: 8px; white-space: nowrap; }
    .legend small { font-size: 12px; color: #6c757d; }
    .swatch { box-sizing: border-box; width: 20px; height: 20px; border-radius: 5px; border: 2px solid #5aae68; background: #9ccba5; }
    .swatch.yellow { border-color: #fde44d; background: #fdf0a6; }
    .swatch.orange { border-color: #fb9533; background: #fcc894; }
    .swatch.red { border-color: #f3443f; background: #f69f9d; }
    .credits { position: absolute; right: 0; bottom: 0; left: 0; display: flex; justify-content: space-between; padding: 0 5px; height: 16px; background: rgba(255, 255, 255, 0.66); color: #4c4c4c; font: 12px/16px Lato, sans-serif; }
  `;

  private sheet(s: Sheet) {
    return svg`<svg x=${s.x} y="-9" width=${s.width} height="600" viewBox="0 0 1568 1568" preserveAspectRatio="none">
      <rect width="1568" height="1568" fill=${s.ground}></rect>
      <path class="light" d=${s.light}></path><path class="urban" d=${s.urban}></path><path class="water" d=${s.water}></path>
      <path class="state-line" d=${s.stateLine}></path>
      <path class="road" d=${s.roads}></path><path class="highway" d=${s.highways}></path>
      <path class="border-base" d=${s.border} stroke=${s.borderBase}></path><path class="border" d=${s.border}></path>
      <path class="area" d=${s.area}></path><path class="shade" d=${s.shade}></path><path class="area-water" d=${s.areaWater}></path>
      <path class="stream" d=${s.streams}></path>
      <path class="area-road" d=${s.areaRoads}></path><path class="area-highway" d=${s.areaHighways}></path>
      <path class="line" d=${s.lines}></path>
      <path class="halo" d=${s.edge}></path><path class="edge" d=${s.edge}></path>
    </svg>`;
  }

  render() {
    return html`
      <svg class="canvas" viewBox="0 0 1610 584" preserveAspectRatio="xMidYMid slice" role="img" aria-label="Catchments">
        ${SHEETS.map((s) => this.sheet(s))}
        <svg x="470" y="-9" width="540" height="600" viewBox="0 0 1568 1568" preserveAspectRatio="none">
          ${CATCHMENTS.map((c) => svg`<path class=${c.band} d=${c.d}></path>`)}
        </svg>
        ${CATCHMENTS.map((c) => svg`<text class="name" x=${c.x} y=${c.y}>${c.name}</text>`)}
      </svg>
      <div class="zoom">
        <button aria-label="Zoom in"><svg viewBox="0 0 16 16"><path d="M0 7.5h16M7.5 0v16" /></svg></button>
        <button aria-label="Zoom out"><svg viewBox="0 0 16 16"><path d="M0 7.5h16" /></svg></button>
      </div>
      <div class="info">
        <p><b>Metric:</b> <span>RDII Volume by Pipe Length</span></p>
        <p><b>Storm Start:</b> <span>3:50pm Nov 23rd, 2017.</span></p>
        <p><b>Storm End:</b> <span>7:10pm Nov 23rd, 2017.</span></p>
        <p><b>Total Rainfall:</b> <span>4.5 in.</span></p>
      </div>
      <div class="legend">
        <h3>Legend</h3>
        <ul>
          <li><i class="swatch"></i><span>0-4 <small>Gal/LF</small></span></li>
          <li><i class="swatch yellow"></i><span>5-9 <small>Gal/LF</small></span></li>
          <li><i class="swatch orange"></i><span>10-14 <small>Gal/LF</small></span></li>
          <li><i class="swatch red"></i><span>15-19 <small>Gal/LF</small></span></li>
        </ul>
      </div>
      <div class="credits"><span>Esri, HERE, Garmin, NGA, USGS, NPS</span><span>Powered by Esri</span></div>
    `;
  }
}

interface Choice {
  label: string;
  unit?: string;
}

const STORMS: Choice[] = [
  { label: "Sun Oct 05 2014" },
  { label: "Thu Mar 05 2015" },
  { label: "Fri May 05 2017" },
  { label: "Fri Jan 05 2018" },
  { label: "Fri Nov 02 2018" },
];
const METRICS: Choice[] = [
  { label: "RDII Volume by Catchment Area", unit: "(MG)" },
  { label: "RDII Volume by Pipe Length", unit: "(gal/LF)" },
  { label: "RDII Flow per Pipe Area", unit: "(MGD/in-mile)" },
  { label: "Peak Flow per Area", unit: "(MGD/ft^2)" },
  { label: "Cv Rain Captured", unit: "(%)" },
];
const COLUMNS = [
  { title: "Catchment Area", unit: "ft²", kind: "muted" },
  { title: "Pipe Length", unit: "mi", kind: "muted" },
  { title: "Pipe Area", unit: "in-mile", kind: "muted" },
  { title: "RDII Volume by Catchment Area", unit: "MG", kind: "" },
  { title: "RDII Volume by Pipe Length", unit: "gal/LF", kind: "" },
  { title: "RDII Flow per Pipe Area", unit: "MGD/in-mile", kind: "" },
  { title: "Peak Flow per Area", unit: "MGD/ft^2", kind: "" },
  { title: "Cv Rain Captured", unit: "%", kind: "" },
];
const SITES: [string, string[]][] = [
  ["MH-03", ["870000", "25.5", "988", "2", "3", "6", "8", "8"]],
  ["MH-04", ["950000", "25.5", "988", "2", "2", "7", "8", "9"]],
  ["MH-06", ["650000", "25.5", "988", "1", "3", "7", "8", "8"]],
  ["MH-07", ["550000", "25.5", "988", "2", "3", "7", "8", "8"]],
  ["MH-08", ["750000", "25.5", "988", "2", "18", "6", "8", "9"]],
  ["MH-11", ["390000", "25.5", "988", "2", "8", "6", "8", "9"]],
  ["MH-12", ["780000", "25.5", "988", "1", "9", "7", "8", "9"]],
];

@customElement("app-root")
class AppRoot extends LitElement {
  @state() private storm = 1;
  @state() private metric = 1;

  static styles = css`
    :host { display: block; padding: 0 15px 30px 30px; background: #fff; color: #212529; font-family: "Open Sans", "Noto Sans", sans-serif; }
    header { display: flex; align-items: center; gap: 20px; height: 109px; padding-top: 7px; box-sizing: border-box; }
    h1 { margin: 0; font-size: 22px; line-height: 30px; font-weight: 400; }
    h1 b { font-weight: 600; }
    .edit { display: flex; align-items: center; gap: 4px; color: #0a7ffb; font-size: 15px; line-height: 24px; text-decoration: none; }
    .edit svg { width: 18px; height: 16px; fill: currentColor; }
    main { display: grid; grid-template-columns: 250px minmax(0, 1fr); gap: 24px 30px; align-items: start; }
    catchment-map { height: 584px; }
    .panel { box-sizing: border-box; display: flex; flex-direction: column; gap: 8px; padding: 16px; border: 1px solid #dee2e6; }
    .storms { min-height: 584px; border-radius: 4px; }
    .metrics { min-height: 400px; }
    h2 { margin: 0; font-size: 15px; line-height: 24px; font-weight: 700; }
    .choice { padding: 6px 6px 4px; border: 0; border-radius: 3px; background: #f0f1f5; color: #212529; font: inherit; font-size: 13px; line-height: 21px; text-align: center; }
    .choice.on { background: #0a7ffb; color: #fff; }
    .unit { white-space: nowrap; }
    table { width: 100%; table-layout: fixed; border-collapse: separate; border-spacing: 0; font-size: 12px; text-align: left; }
    .w-site { width: 79px; } .w-view { width: 104px; } .w-0 { width: 149px; } .w-1 { width: 118px; } .w-2 { width: 109px; }
    .w-3 { width: 270px; } .w-4 { width: 239px; } .w-5 { width: 207px; } .w-6 { width: 174px; } .w-7 { width: 161px; }
    th, td { box-sizing: border-box; padding: 1px 12px 0; }
    thead th { height: 46px; border-top: 1px solid #dee2e6; border-bottom: 2px solid #dce0e4; background: #e9ecef; color: #495057; font-weight: 700; white-space: nowrap; }
    thead .muted { background: #dadde2; border-color: #d1d5da; }
    tbody th, tbody td { height: 56px; border-top: 1px solid #dee2e6; }
    tbody tr:first-child th, tbody tr:first-child td { height: 55px; border-top: 0; }
    tbody .muted { background: #f0f1f5; }
    td small { font-size: 12px; color: #6c757d; }
    thead .active, tbody .active { background: #0a7ffb; border-color: #096edb; color: #fff; }
    .active small { color: #fff; }
    .site { font-weight: 700; }
    .view { display: inline-flex; align-items: center; justify-content: center; gap: 4px; box-sizing: border-box; width: 64px; height: 31px; padding: 0; border: 1px solid #0a7ffb; border-radius: 3px; background: #fff; color: #0a7ffb; font: inherit; font-size: 13px; vertical-align: middle; }
    .view svg { width: 12px; height: 14px; fill: currentColor; }
  `;

  private choices(items: Choice[], selected: number, pick: (i: number) => void) {
    return items.map((c, i) => html`<button class=${classMap({ choice: true, on: i === selected })} aria-pressed=${i === selected} @click=${() => pick(i)}>${c.label}${c.unit ? html` <span class="unit">${c.unit}</span>` : ""}</button>`);
  }

  private kind(i: number) {
    return i - 3 === this.metric ? "active" : COLUMNS[i].kind;
  }

  render() {
    return html`
      <header>
        <h1><b>Project:</b> Demo I&amp;I Study 2018</h1>
        <a class="edit" href="#edit"><svg viewBox="0 0 576 512" aria-hidden="true"><path d="M402.6 83.2l90.2 90.2c3.8 3.8 3.8 10 0 13.8L274.4 405.6l-92.8 10.3c-12.4 1.4-22.9-9.1-21.5-21.5l10.3-92.8L388.8 83.2c3.8-3.8 10-3.8 13.8 0zm162-22.9l-48.8-48.8c-15.2-15.2-39.9-15.2-55.2 0l-35.4 35.4c-3.8 3.8-3.8 10 0 13.8l90.2 90.2c3.8 3.8 10 3.8 13.8 0l35.4-35.4c15.2-15.3 15.2-40 0-55.2zM384 346.2V448H64V128h229.8c3.2 0 6.2-1.3 8.5-3.5l40-40c7.6-7.6 2.2-20.5-8.5-20.5H48C21.5 64 0 85.5 0 112v352c0 26.5 21.5 48 48 48h352c26.5 0 48-21.5 48-48V306.2c0-10.7-12.9-16-20.5-8.5l-40 40c-2.2 2.3-3.5 5.3-3.5 8.5z"/></svg>Edit Project</a>
      </header>
      <main>
        <section class="panel storms">
          <h2>Choose Rain Storm:</h2>
          ${this.choices(STORMS, this.storm, (i) => (this.storm = i))}
        </section>
        <catchment-map></catchment-map>
        <section class="panel metrics">
          <h2>Choose Metric:</h2>
          ${this.choices(METRICS, this.metric, (i) => (this.metric = i))}
        </section>
        <table>
          <colgroup>
            <col class="w-site" /><col class="w-view" />
            ${COLUMNS.map((_, i) => html`<col class="w-${i}" />`)}
          </colgroup>
          <thead>
            <tr>
              <th colspan="2" scope="col">Site</th>
              ${COLUMNS.map((c, i) => html`<th scope="col" class=${this.kind(i)}>${c.title}</th>`)}
            </tr>
          </thead>
          <tbody>
            ${SITES.map(([name, values]) => html`<tr>
              <th scope="row" class="site">${name}</th>
              <td><button class="view"><svg viewBox="0 0 448 512" aria-hidden="true"><path d="M190.5 66.9l22.2-22.2c9.4-9.4 24.6-9.4 33.9 0L441 239c9.4 9.4 9.4 24.6 0 33.9L246.6 467.3c-9.4 9.4-24.6 9.4-33.9 0l-22.2-22.2c-9.5-9.5-9.3-25 .4-34.3L311.4 296H24c-13.3 0-24-10.7-24-24v-32c0-13.3 10.7-24 24-24h287.4L190.9 101.2c-9.8-9.3-10-24.8-.4-34.3z"/></svg>View</button></td>
              ${values.map((v, i) => html`<td class=${this.kind(i)}>${v} <small>${COLUMNS[i].unit}</small></td>`)}
            </tr>`)}
          </tbody>
        </table>
      </main>
    `;
  }
}
